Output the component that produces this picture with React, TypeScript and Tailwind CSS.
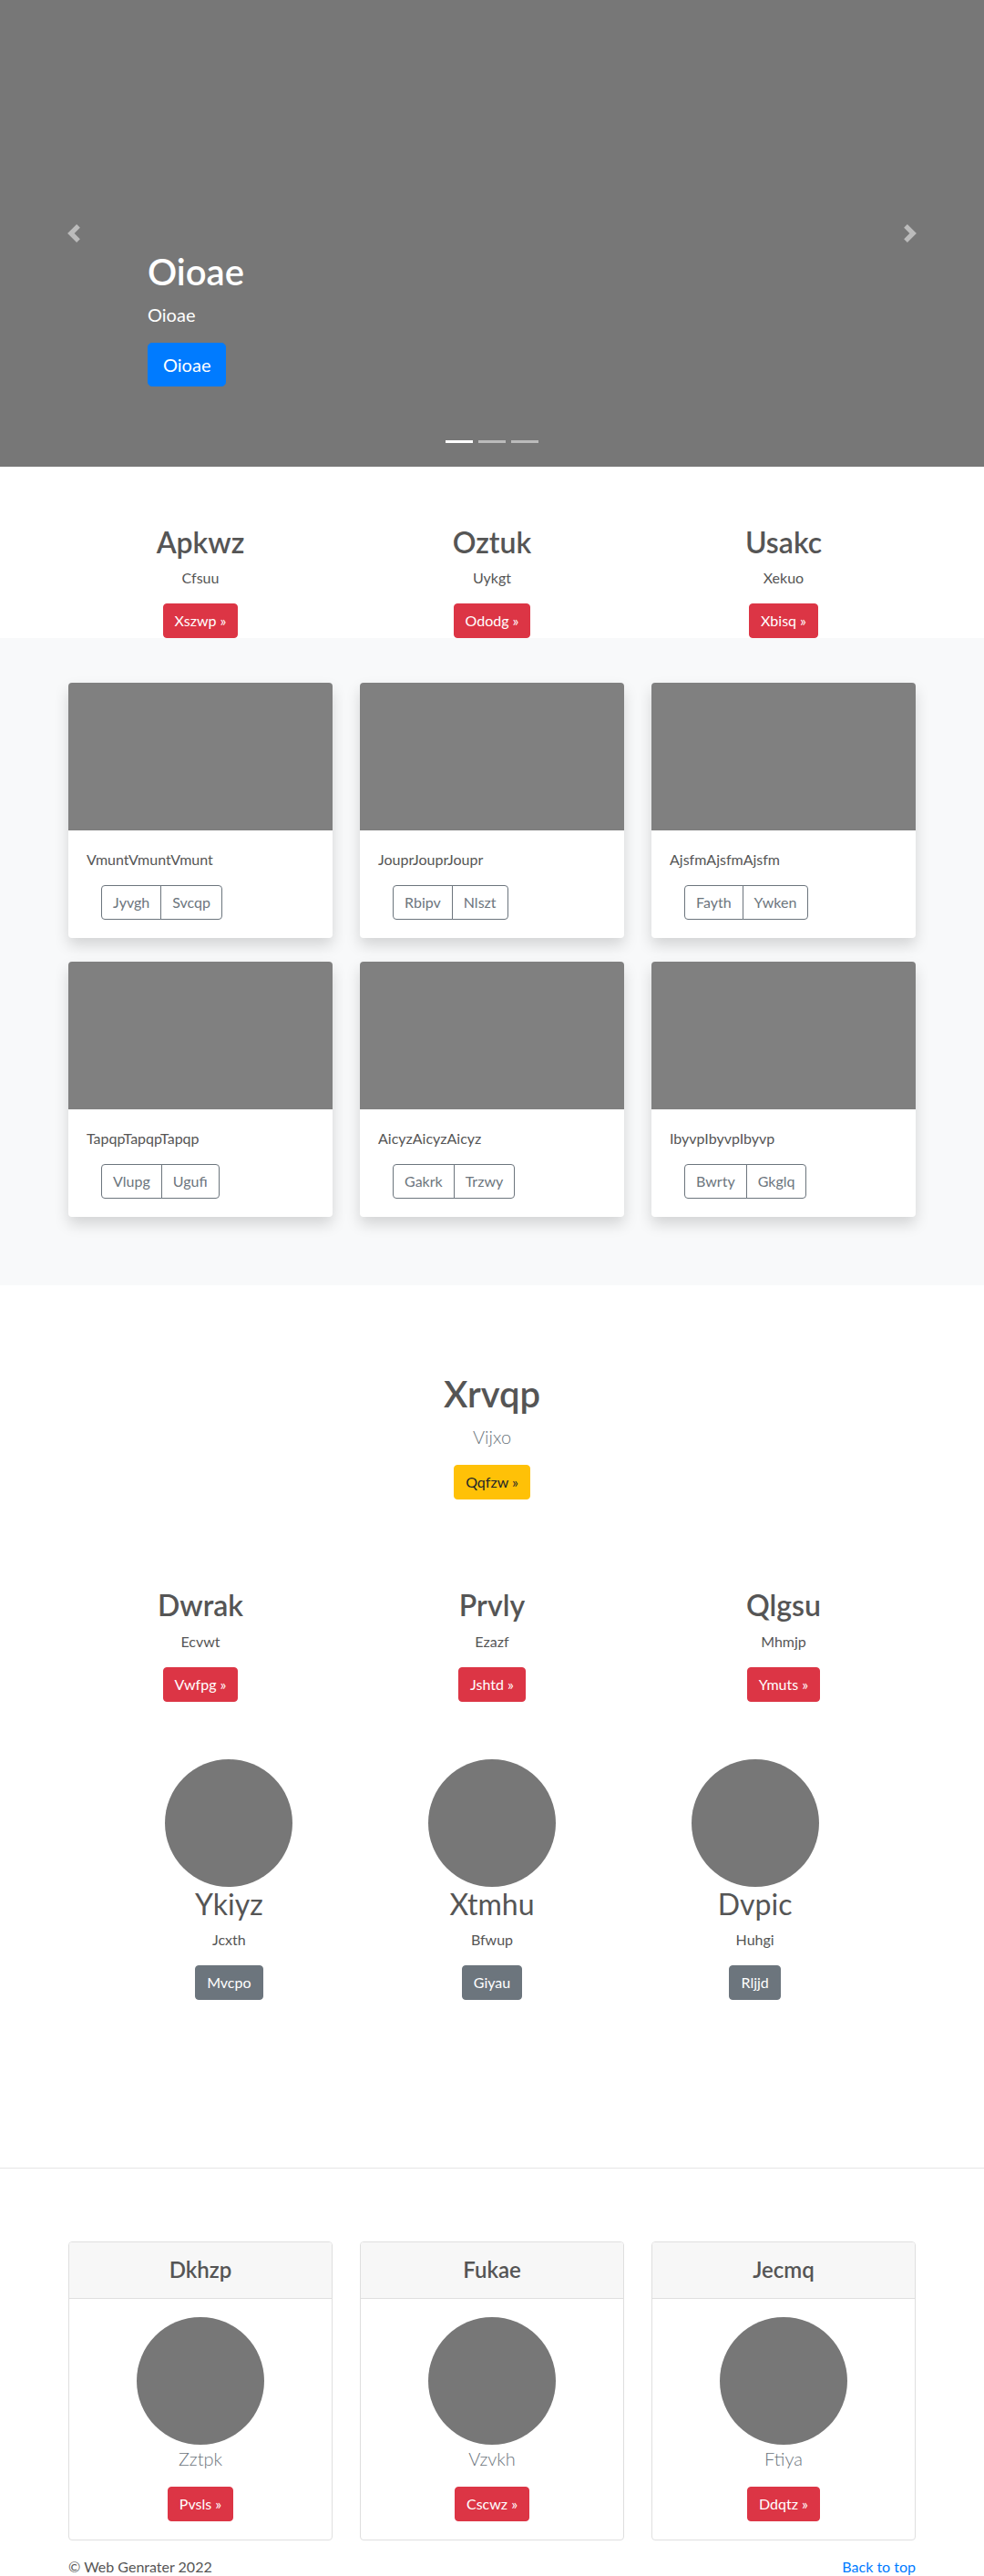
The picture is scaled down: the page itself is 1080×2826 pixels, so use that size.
import React from "react";

const btnRed =
  "inline-block rounded-[4px] border border-[#dc3545] bg-[#dc3545] px-3 py-1.5 text-[16px] leading-6 text-white";

type Col = { h: string; p: string; b: string };

function Marketing({ items }: { items: Col[] }) {
  return (
    <div className="mx-auto grid w-[960px] grid-cols-3">
      {items.map((it) => (
        <div key={it.h} className="flex flex-col items-center text-center">
          <h2 className="mb-2 text-[32px] font-semibold leading-[1.2] text-[#555]">{it.h}</h2>
          <p className="mb-4 text-[16px] leading-6">{it.p}</p>
          <a className={btnRed}>{it.b} »</a>
        </div>
      ))}
    </div>
  );
}

const album = [
  { t: "VmuntVmuntVmunt", a: "Jyvgh", b: "Svcqp" },
  { t: "JouprJouprJoupr", a: "Rbipv", b: "Nlszt" },
  { t: "AjsfmAjsfmAjsfm", a: "Fayth", b: "Ywken" },
  { t: "TapqpTapqpTapqp", a: "Vlupg", b: "Ugufi" },
  { t: "AicyzAicyzAicyz", a: "Gakrk", b: "Trzwy" },
  { t: "IbyvpIbyvpIbyvp", a: "Bwrty", b: "Gkglq" },
];

const circles: Col[] = [
  { h: "Ykiyz", p: "Jcxth", b: "Mvcpo" },
  { h: "Xtmhu", p: "Bfwup", b: "Giyau" },
  { h: "Dvpic", p: "Huhgi", b: "Rljjd" },
];

const pricing: Col[] = [
  { h: "Dkhzp", p: "Zztpk", b: "Pvsls" },
  { h: "Fukae", p: "Vzvkh", b: "Cscwz" },
  { h: "Jecmq", p: "Ftiya", b: "Ddqtz" },
];

export default function App() {
  return (
    <div className="w-[1080px] bg-white text-[16px] leading-6 text-[#555] font-[family-name:Lato,'Liberation_Sans',sans-serif]">
      {/* Hero carousel */}
      <div className="relative h-[512px] bg-[#777]">
        <div className="flex h-full flex-col items-start justify-end pb-[88px] pl-[162px] text-white">
          <h1 className="mb-2 text-[40px] font-semibold leading-[1.2]">Oioae</h1>
          <p className="mb-4 text-[20px] leading-[1.5]">Oioae</p>
          <a className="inline-block rounded-[4.8px] border border-[#007bff] bg-[#007bff] px-4 py-2 text-[20px] leading-[1.5] text-white">
            Oioae
          </a>
        </div>
        <svg
          className="absolute left-[71px] top-[246px] opacity-50"
          width="20"
          height="20"
          viewBox="0 0 8 8"
          fill="#fff"
        >
          <path d="M5.25 0l-4 4 4 4 1.5-1.5L4.25 4l2.5-2.5L5.25 0z" />
        </svg>
        <svg
          className="absolute left-[989px] top-[246px] opacity-50"
          width="20"
          height="20"
          viewBox="0 0 8 8"
          fill="#fff"
        >
          <path d="M2.75 0l-1.5 1.5L3.75 4l-2.5 2.5L2.75 8l4-4-4-4z" />
        </svg>
        <div className="absolute bottom-[26px] left-0 right-0 flex justify-center gap-[6px]">
          <span className="h-[3px] w-[30px] bg-white" />
          <span className="h-[3px] w-[30px] bg-white/50" />
          <span className="h-[3px] w-[30px] bg-white/50" />
        </div>
      </div>

      {/* Marketing 1 */}
      <div className="mt-16">
        <Marketing
          items={[
            { h: "Apkwz", p: "Cfsuu", b: "Xszwp" },
            { h: "Oztuk", p: "Uykgt", b: "Ododg" },
            { h: "Usakc", p: "Xekuo", b: "Xbisq" },
          ]}
        />
      </div>

      {/* Album */}
      <div className="bg-[#f8f9fa] pb-[75px] pt-[49px]">
        <div className="mx-auto grid w-[930px] grid-cols-3 gap-x-[30px] gap-y-[26px]">
          {album.map((c) => (
            <div
              key={c.t}
              className="overflow-hidden rounded-[4px] bg-white shadow-[0_0.5rem_1rem_rgba(0,0,0,0.15)]"
            >
              <div className="h-[162px] bg-[#808080]" />
              <div className="p-5">
                <p className="mb-4 text-[16px] leading-6">{c.t}</p>
                <div className="ml-4 flex text-[#6c757d]">
                  <span className="rounded-l-[4px] border border-[#6c757d] px-3 py-[6px] leading-6">{c.a}</span>
                  <span className="-ml-px rounded-r-[4px] border border-[#6c757d] px-3 py-[6px] leading-6">{c.b}</span>
                </div>
              </div>
            </div>
          ))}
        </div>
      </div>

      {/* Jumbotron */}
      <div className="flex flex-col items-center pt-[95px] text-center">
        <h1 className="mb-2 text-[40px] font-semibold leading-[1.2] text-[#555]">Xrvqp</h1>
        <p className="mb-4 text-[20px] font-light leading-[1.5] text-[#6c757d]">Vijxo</p>
        <a className="inline-block rounded-[4px] border border-[#ffc107] bg-[#ffc107] px-3 py-1.5 text-[16px] leading-6 text-[#212529]">
          Qqfzw »
        </a>
      </div>

      {/* Marketing 2 */}
      <div className="mt-[97px]">
        <Marketing
          items={[
            { h: "Dwrak", p: "Ecvwt", b: "Vwfpg" },
            { h: "Prvly", p: "Ezazf", b: "Jshtd" },
            { h: "Qlgsu", p: "Mhmjp", b: "Ymuts" },
          ]}
        />
      </div>

      {/* Circles */}
      <div className="mx-auto mt-[63px] grid w-[866px] grid-cols-3">
        {circles.map((c) => (
          <div key={c.h} className="flex flex-col items-center text-center">
            <div className="h-[140px] w-[140px] rounded-full bg-[#777]" />
            <h2 className="mb-2 text-[32px] font-normal leading-[1.2] text-[#555]">{c.h}</h2>
            <p className="mb-4 leading-6">{c.p}</p>
            <a className="inline-block rounded-[4px] border border-[#6c757d] bg-[#6c757d] px-3 py-1.5 leading-6 text-white">
              {c.b}
            </a>
          </div>
        ))}
      </div>

      <div className="mt-[184px] h-px bg-[#e5e5e5]" />

      {/* Pricing cards */}
      <div className="mx-auto mt-[80px] grid w-[930px] grid-cols-3 gap-x-[30px]">
        {pricing.map((c) => (
          <div key={c.h} className="overflow-hidden rounded-[4px] border border-[#dfdfdf] bg-white">
            <div className="border-b border-[#dfdfdf] bg-[#f7f7f7] py-4 text-center">
              <h4 className="text-[24px] font-semibold leading-[1.2] text-[#555]">{c.h}</h4>
            </div>
            <div className="flex flex-col items-center p-5 text-center">
              <div className="h-[140px] w-[140px] rounded-full bg-[#777]" />
              <p className="mb-4 text-[20px] font-light leading-[1.5] text-[#6c757d]">{c.p}</p>
              <a className={btnRed}>{c.b} »</a>
            </div>
          </div>
        ))}
      </div>

      {/* Footer */}
      <div className="mx-auto mt-[17px] flex w-[930px] justify-between pb-8 leading-6">
        <p>© Web Genrater 2022</p>
        <a className="text-[#007bff]">Back to top</a>
      </div>
    </div>
  );
}
